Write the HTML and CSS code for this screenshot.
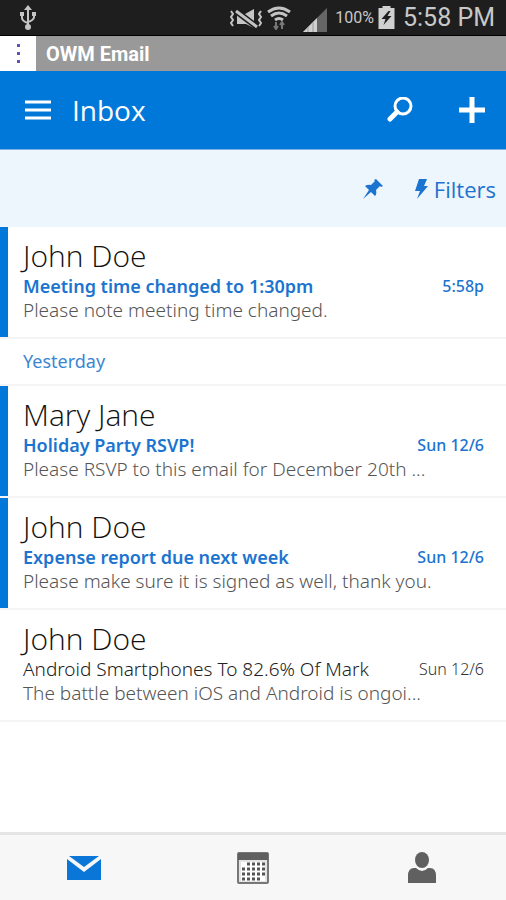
FILE: index.html
```html
<!DOCTYPE html>
<html lang="en">
<head>
    <meta charset="UTF-8">
    <meta name="viewport" content="width=device-width, initial-scale=1.0">
    <title>OWM Email</title>
    <link rel="stylesheet" href="styles.css">
</head>
<body>
    <div class="status-bar">
        <svg class="usb" width="18" height="26" viewBox="0 0 18 26" fill="none" stroke="#c4c4c4" stroke-width="2">
            <path d="M9 4v18M3 9v4q0 3 6 5M15 9v3q0 3-6 5"/>
            <path d="M9 0l4 5H5zM1 7h4v4H1zM13 7h4v4h-4z" fill="#c4c4c4" stroke="none"/>
            <circle cx="9" cy="22" r="3" fill="#c4c4c4" stroke="none"/>
        </svg>
        <div class="status-right">
            <svg width="34" height="22" viewBox="0 0 34 22" fill="none" stroke="#c4c4c4" stroke-width="2">
                <path d="M2 4l2 3-2 3 2 3-2 3 2 3M32 4l-2 3 2 3-2 3 2 3-2 3"/>
                <path d="M8 7h8l9-5v19l-8-4H8z" fill="#c4c4c4" stroke="none"/>
                <path d="M7 4l21 16" stroke="#1e1e1e" stroke-width="6"/>
                <path d="M7 4l21 16" stroke-width="3"/>
            </svg>
            <svg class="wifi" width="24" height="24" viewBox="0 0 24 24" fill="none" stroke="#c4c4c4" stroke-width="3">
                <path d="M1 6q11-8 22 0M4 10q8-6 16 0M8 14q4-3 8 0"/>
                <path d="M9 16v6M7 20l2 3 2-3M15 23v-6M13 19l2-3 2 3" stroke="#777" stroke-width="2"/>
            </svg>
            <svg class="signal" width="24" height="24" viewBox="0 0 24 24">
                <path d="M0 24L24 0v24z" fill="#666"/>
                <path d="M0 24l14-14v14z" fill="#d0d0d0"/>
                <path d="M5 19v5M10 14v10" stroke="#999"/>
            </svg>
            <span class="percent">100%</span>
            <svg class="battery" width="17" height="23" viewBox="0 0 16 23">
                <path d="M4 0h8v2h4v21H0V2h4z" fill="#d0d0d0"/>
                <path d="M10 5l-7 8h4l-2 6 8-9H9l3-5z" fill="#1e1e1e"/>
            </svg>
            <span class="clock">5:58 PM</span>
        </div>
    </div>

    <div class="title-bar">
        <button class="more" aria-label="More options"><i></i><i></i><i></i></button>
        <div class="app-name">OWM Email</div>
    </div>

    <header class="header">
        <button class="icon-btn" aria-label="Menu">
            <svg width="26" height="22" viewBox="0 0 26 22" stroke="#fff" stroke-width="3"><path d="M0 3h26M0 11h26M0 19h26"/></svg>
        </button>
        <h1>Inbox</h1>
        <button class="icon-btn search" aria-label="Search">
            <svg width="26" height="26" viewBox="0 0 26 26" fill="none" stroke="#fff" stroke-width="3">
                <circle cx="16" cy="9" r="8"/>
                <path d="M10 15l-7 7" stroke-width="5" stroke-linecap="round"/>
            </svg>
        </button>
        <button class="icon-btn" aria-label="New message">
            <svg width="26" height="26" viewBox="0 0 26 26" stroke="#fff" stroke-width="5"><path d="M13 0v26M0 13h26"/></svg>
        </button>
    </header>

    <div class="toolbar">
        <button class="icon-btn" aria-label="Pinned">
            <svg width="20" height="20" viewBox="0 0 20 20" fill="#1b74cf">
                <path d="M13 0l7 7-2 1-1-1-4 4q1 4-1 6l-4-4-8 7 6-9-4-4q3-2 6-1l4-4-1-1z"/>
            </svg>
        </button>
        <button class="filters">
            <svg width="13" height="21" viewBox="0 0 13 21" fill="#1b74cf"><path d="M4 1h8L9 8h4L2 21l3-8H0z"/></svg>
            Filters
        </button>
    </div>

    <main class="mail-list">
        <a class="mail unread" href="#">
            <span class="from">John Doe</span>
            <span class="subject">Meeting time changed to 1:30pm</span>
            <span class="date">5:58p</span>
            <span class="preview">Please note meeting time changed.</span>
        </a>
        <h2 class="day">Yesterday</h2>
        <a class="mail unread" href="#">
            <span class="from">Mary Jane</span>
            <span class="subject">Holiday Party RSVP!</span>
            <span class="date">Sun 12/6</span>
            <span class="preview">Please RSVP to this email for December 20th ...</span>
        </a>
        <a class="mail unread" href="#">
            <span class="from">John Doe</span>
            <span class="subject">Expense report due next week</span>
            <span class="date">Sun 12/6</span>
            <span class="preview">Please make sure it is signed as well, thank you.</span>
        </a>
        <a class="mail" href="#">
            <span class="from">John Doe</span>
            <span class="subject">Android Smartphones To 82.6% Of Mark</span>
            <span class="date">Sun 12/6</span>
            <span class="preview">The battle between iOS and Android is ongoi...</span>
        </a>
    </main>

    <nav class="tabs">
        <a href="#" aria-label="Mail">
            <svg width="34" height="24" viewBox="0 0 34 24" fill="#0a76d8">
                <path d="M2 0h30L17 11zM0 3l17 13L34 3v21H0z"/>
            </svg>
        </a>
        <a href="#" aria-label="Calendar">
            <svg width="32" height="32" viewBox="0 0 32 32">
                <rect x="1" y="1" width="30" height="30" rx="1" fill="#e4e4e4" stroke="#777" stroke-width="2"/>
                <path d="M1 1h30v7H1z" fill="#606060"/>
                <path d="M4 10h24v19H4z" fill="#fff"/>
                <path d="M10 12h18M5 17h23M5 22h23M5 27h18" stroke="#555" stroke-width="3" stroke-dasharray="3 2"/>
            </svg>
        </a>
        <a href="#" aria-label="People">
            <svg width="28" height="32" viewBox="0 0 28 32" fill="#606060">
                <ellipse cx="14" cy="8" rx="7" ry="8"/>
                <path d="M0 31v-7q0-8 6-8h2q6 6 12 0h2q6 0 6 8v7z"/>
            </svg>
        </a>
    </nav>
</body>
</html>
```
FILE: styles.css
```css
* { margin: 0; padding: 0; box-sizing: border-box; }
body { min-height: 100vh; display: flex; flex-direction: column; background: #fff; font-family: "Noto Sans", "Open Sans", sans-serif; }
button { background: none; border: none; font-family: inherit; cursor: pointer; }
a { color: inherit; text-decoration: none; }
svg { display: block; flex: none; }

.status-bar { height: 36px; padding: 0 11px 0 19px; display: flex; align-items: center; justify-content: space-between; background: #1e1e1e; border-bottom: 1px solid #000; color: #c8c8c8; font-family: Roboto, sans-serif; }
.status-right { display: flex; align-items: center; }
.wifi { margin-left: 4px; }
.signal { margin: 4px 8px 0 12px; }
.percent { font-size: 16px; }
.battery { margin: 0 8px 0 4px; }
.clock { font-size: 25px; }

.title-bar { height: 35px; display: flex; background: #999; }
.more { width: 36px; background: #fff; display: flex; flex-direction: column; align-items: center; justify-content: center; gap: 5px; }
.more i { width: 3px; height: 3px; background: #6152b5; }
.app-name { padding-left: 10px; line-height: 36px; font-family: Roboto, sans-serif; font-size: 20px; font-weight: bold; color: #fff; }

.header { height: 79px; padding: 0 21px 0 25px; display: flex; align-items: center; background: #0078d9; border-bottom: 1px solid #7fb0e6; color: #fff; }
.header h1 { flex: 1; margin-left: 21px; font-family: "Open Sans", sans-serif; font-size: 28px; line-height: 36px; font-weight: normal; }
.search { margin-right: 46px; }

.toolbar { height: 77px; padding: 0 10px; display: flex; align-items: center; justify-content: flex-end; gap: 32px; background: #edf5fd; }
.filters { display: flex; align-items: center; gap: 6px; font-family: "Open Sans", sans-serif; font-size: 22px; color: #1b74cf; }

.mail-list { flex: 1; }
.mail { display: grid; grid-template-columns: 1fr auto; padding: 10px 22px 15px 15px; border-left: 8px solid transparent; margin-bottom: 2px; box-shadow: 0 2px #f3f4f5; }
.unread { border-left-color: #0078d9; }
.from, .preview { grid-column: 1 / -1; }
.from { font-family: "Open Sans", sans-serif; font-size: 30px; line-height: 37px; font-weight: 300; color: #111; }
.subject { font-size: 19px; line-height: 24px; font-weight: 300; color: #222; }
.date { font-size: 16px; line-height: 24px; font-weight: 300; color: #333; }
.preview { font-size: 19px; line-height: 24px; font-weight: 300; color: #555; white-space: nowrap; }
.unread .subject { font-size: 18px; font-weight: 600; color: #1b74cf; }
.unread .date { font-weight: 500; color: #1b74cf; }
.day { padding-left: 23px; border-bottom: 2px solid #f3f4f5; font-size: 18px; line-height: 45px; font-weight: normal; color: #3b86d3; }

.tabs { height: 68px; border-top: 3px solid #e5e5e5; background: #f7f7f7; display: grid; grid-template-columns: repeat(3, 1fr); align-items: center; justify-items: center; }
```
